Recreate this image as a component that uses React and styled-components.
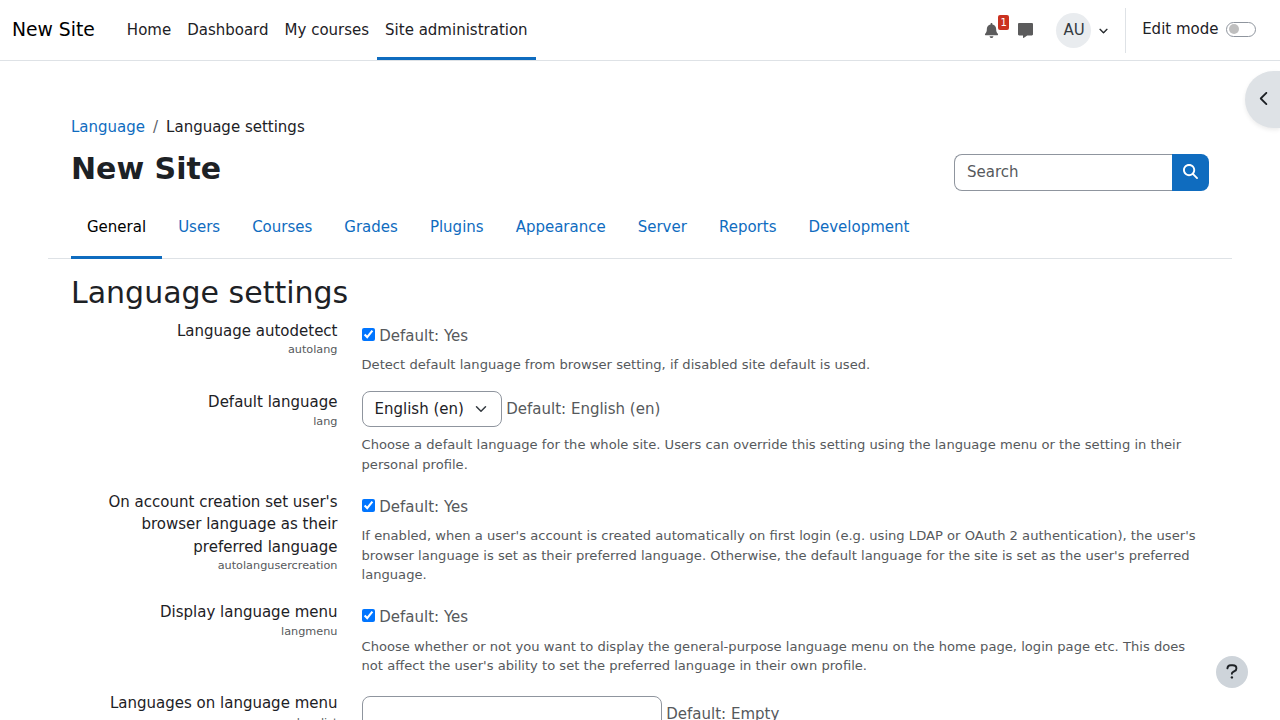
import React from "react";
import styled, { createGlobalStyle } from "styled-components";
import { FaBell, FaChevronDown, FaChevronLeft, FaMagnifyingGlass } from "react-icons/fa6";

const GlobalStyle = createGlobalStyle`
  *, *::before, *::after { box-sizing: border-box; }
  html, body { height: 720px; overflow: hidden; }
  body {
    margin: 0;
    background: #fff;
    color: #1d2125;
    font: 400 15px/1.5 "DejaVu Sans", sans-serif;
  }
  svg { display: block; }
`;

const Navbar = styled.header`
  display: flex;
  align-items: stretch;
  height: 61px;
  padding: 0 24px 0 12px;
  border-bottom: 1px solid #dee2e6;
`;

const Brand = styled.a`
  align-self: center;
  margin-right: 24px;
  color: #000;
  font-size: 18.75px;
`;

const PrimaryNav = styled.nav`
  display: flex;
  flex: 1;
`;

const PrimaryLink = styled.a`
  display: flex;
  align-items: center;
  padding: 3px 8px 0;
  border-bottom: 3px solid ${(p) => (p.$active ? "#0f6cbf" : "transparent")};
`;

const UserTools = styled.div`
  display: flex;
  align-items: center;
`;

const ToolIcon = styled.span`
  position: relative;
  color: #5b5b5c;
  margin-right: ${(p) => p.$gap}px;
`;

const Badge = styled.span`
  position: absolute;
  top: -8px;
  left: 14px;
  width: 11px;
  height: 15px;
  border-radius: 2px;
  background: #ca3120;
  color: #fff;
  font-size: 10px;
  line-height: 15px;
  text-align: center;
`;

const Avatar = styled.span`
  width: 35px;
  height: 35px;
  margin-top: 1px;
  padding-left: 1px;
  border-radius: 50%;
  background: #e9ecef;
  color: #343a40;
  line-height: 35px;
  text-align: center;
`;

const Caret = styled.span`
  margin: 1px 17px 0 8px;

  path { stroke: currentColor; stroke-width: 16; }
`;

const EditMode = styled.label`
  display: flex;
  align-items: center;
  gap: 7.5px;
  height: 45px;
  padding: 0 0 2px 16px;
  border-left: 1px solid #dee2e6;
`;

const Switch = styled.span`
  width: 30px;
  height: 15px;
  padding: 1.5px;
  border: 1px solid #8f959e;
  border-radius: 8px;

  &::before {
    content: "";
    display: block;
    width: 10px;
    height: 10px;
    border-radius: 50%;
    background: #bfbfbf;
  }
`;

const Page = styled.main`
  padding: 54px 48px 0;
`;

const Inset = styled.div`
  padding: 0 23px;
`;

const Breadcrumb = styled.nav`
  display: flex;
  gap: 8px;
  padding-top: 1px;
`;

const Link = styled.a`
  color: #0f6cbf;
`;

const Separator = styled.span`
  color: #5b6168;
`;

const TitleBar = styled.div`
  display: flex;
  justify-content: space-between;
  align-items: flex-start;
  height: 55.5px;
  margin-top: 12px;
`;

const SiteTitle = styled.h1`
  margin: 0;
  font-size: 30px;
  font-weight: 700;
  line-height: 36px;
`;

const SearchForm = styled.form`
  display: flex;
  margin-top: 3.5px;
`;

const SearchInput = styled.input`
  width: 218px;
  height: 37px;
  padding: 0 12px 2px;
  border: 1px solid #8f959e;
  border-right: 0;
  border-radius: 8px 0 0 8px;
  font: inherit;

  &::placeholder { color: #56595c; opacity: 1; }
`;

const SearchButton = styled.button`
  width: 37px;
  height: 37px;
  padding: 0 0 2px 11px;
  border: 0;
  border-radius: 0 8px 8px 0;
  background: #0f6cbf;
  color: #fff;
`;

const Tabs = styled.nav`
  display: flex;
  height: 53px;
  padding: 0 23px;
  box-shadow: inset 0 -1px #dee2e6;
`;

const Tab = styled.a`
  height: 53px;
  padding: 10px 16px 0;
  color: ${(p) => (p.$active ? "#000" : "#0f6cbf")};
  border-bottom: 3px solid ${(p) => (p.$active ? "#0f6cbf" : "transparent")};
`;

const Heading = styled.h2`
  margin: 15.5px 0 9.3px;
  font-size: 30px;
  font-weight: 400;
  line-height: 36px;
`;

const SettingRow = styled.div`
  display: grid;
  grid-template-columns: 266.5px 1fr;
  column-gap: 24px;
  margin-bottom: 16.12px;
`;

const SettingLabel = styled.div`
  text-align: right;
`;

const ShortName = styled.span`
  display: block;
  margin-top: -1px;
  color: #56595c;
  font-size: 11.25px;
  line-height: 17px;
`;

const Control = styled.div`
  display: flex;
  align-items: center;
  gap: 4.77px;
  padding-top: ${(p) => p.$top || 0}px;
  color: #56595c;
`;

const Checkbox = styled.input`
  width: 13px;
  height: 13px;
  margin: 0 0 3.3px;
`;

const Select = styled.span`
  display: flex;
  align-items: center;
  justify-content: space-between;
  width: 140px;
  height: 36px;
  padding: 0 12px;
  border: 1px solid #8f959e;
  border-radius: 8px;
  color: #1d2125;
`;

const TextInput = styled.input`
  width: 300px;
  height: 36.5px;
  border: 1px solid #8f959e;
  border-radius: 8px;
`;

const Description = styled.p`
  margin: 8px 0 0;
  color: #56595c;
  font-size: 13.125px;
  line-height: 19.6875px;
`;

const DrawerToggle = styled.button`
  position: fixed;
  top: 71px;
  right: 0;
  width: 35px;
  height: 57px;
  padding: 0 0 2px 12px;
  border: 0;
  border-radius: 29px 0 0 29px;
  background: #dee2e6;
  color: #1d2125;
  box-shadow: 0 2px 4px rgba(0, 0, 0, 0.08);
`;

const HelpButton = styled.button`
  position: fixed;
  right: 32px;
  bottom: 32px;
  display: grid;
  place-items: center;
  width: 32px;
  height: 32px;
  padding: 0 0 2px;
  border: 0;
  border-radius: 50%;
  background: #ced4da;
  color: #1d2125;
`;

const primaryLinks = ["Home", "Dashboard", "My courses", "Site administration"];
const tabs = ["General", "Users", "Courses", "Grades", "Plugins", "Appearance", "Server", "Reports", "Development"];

function MessageIcon() {
  return (
    <svg width="15" height="15" viewBox="0 0 15 15" fill="currentColor">
      <path d="M1.2 0H13.8C14.5 0 15 .5 15 1.2V11.3C15 12 14.5 12.5 13.8 12.5H9.2L5.6 14.9C5.3 15.1 5 14.9 5 14.6V12.5H1.2C.5 12.5 0 12 0 11.3V1.2C0 .5.5 0 1.2 0Z" />
    </svg>
  );
}

function SelectArrow() {
  return (
    <svg width="16" height="12" viewBox="0 0 16 16" fill="none">
      <path d="m2 5 6 6 6-6" stroke="#343a40" strokeWidth="2" strokeLinecap="round" strokeLinejoin="round" />
    </svg>
  );
}

function QuestionIcon() {
  return (
    <svg width="12" height="15" viewBox="0 0 12 15" fill="none">
      <path d="M1.4 4.3C1.6 2.3 2.9 1.2 4.7 1.2H6.8C8.9 1.2 10.4 2.5 10.4 4.4C10.4 5.7 9.7 6.6 8.5 7.2L6.8 8.1C6.2 8.4 5.9 8.8 5.9 9.4V9.8" stroke="currentColor" strokeWidth="1.9" strokeLinecap="round" strokeLinejoin="round" />
      <circle cx="5.9" cy="13.4" r="1.2" fill="currentColor" />
    </svg>
  );
}

function Setting({ label, name, top, control, fallback, children }) {
  return (
    <SettingRow>
      <SettingLabel>
        {label}
        <ShortName>{name}</ShortName>
      </SettingLabel>
      <div>
        <Control $top={top}>
          {control}
          <span>Default: {fallback}</span>
        </Control>
        {children && <Description>{children}</Description>}
      </div>
    </SettingRow>
  );
}

const checked = <Checkbox type="checkbox" defaultChecked />;

export default function App() {
  return (
    <>
      <GlobalStyle />
      <Navbar>
        <Brand>New Site</Brand>
        <PrimaryNav>
          {primaryLinks.map((t) => (
            <PrimaryLink key={t} $active={t === "Site administration"}>{t}</PrimaryLink>
          ))}
        </PrimaryNav>
        <UserTools>
          <ToolIcon $gap={19}>
            <FaBell size={15} />
            <Badge>1</Badge>
          </ToolIcon>
          <ToolIcon $gap={23}><MessageIcon /></ToolIcon>
          <Avatar>AU</Avatar>
          <Caret><FaChevronDown size={9} /></Caret>
          <EditMode>Edit mode<Switch /></EditMode>
        </UserTools>
      </Navbar>

      <Page>
        <Inset>
          <Breadcrumb>
            <Link>Language</Link>
            <Separator>/</Separator>
            <span>Language settings</span>
          </Breadcrumb>
          <TitleBar>
            <SiteTitle>New Site</SiteTitle>
            <SearchForm>
              <SearchInput placeholder="Search" />
              <SearchButton type="button"><FaMagnifyingGlass size={15} /></SearchButton>
            </SearchForm>
          </TitleBar>
        </Inset>
        <Tabs>
          {tabs.map((t) => <Tab key={t} $active={t === "General"}>{t}</Tab>)}
        </Tabs>
        <Inset>
          <Heading>Language settings</Heading>
          <Setting label="Language autodetect" name="autolang" top={5} control={checked} fallback="Yes">
            Detect default language from browser setting, if disabled site default is used.
          </Setting>
          <Setting
            label="Default language"
            name="lang"
            control={<Select>English (en)<SelectArrow /></Select>}
            fallback="English (en)"
          >
            Choose a default language for the whole site. Users can override this setting using the language menu or the setting in their personal profile.
          </Setting>
          <Setting label="On account creation set user's browser language as their preferred language" name="autolangusercreation" top={5} control={checked} fallback="Yes">
            If enabled, when a user's account is created automatically on first login (e.g. using LDAP or OAuth 2 authentication), the user's browser language is set as their preferred language. Otherwise, the default language for the site is set as the user's preferred language.
          </Setting>
          <Setting label="Display language menu" name="langmenu" top={5} control={checked} fallback="Yes">
            Choose whether or not you want to display the general-purpose language menu on the home page, login page etc. This does not affect the user's ability to set the preferred language in their own profile.
          </Setting>
          <Setting label="Languages on language menu" name="langlist" top={4} control={<TextInput />} fallback="Empty" />
        </Inset>
      </Page>

      <DrawerToggle><FaChevronLeft size={15} /></DrawerToggle>
      <HelpButton><QuestionIcon /></HelpButton>
    </>
  );
}
